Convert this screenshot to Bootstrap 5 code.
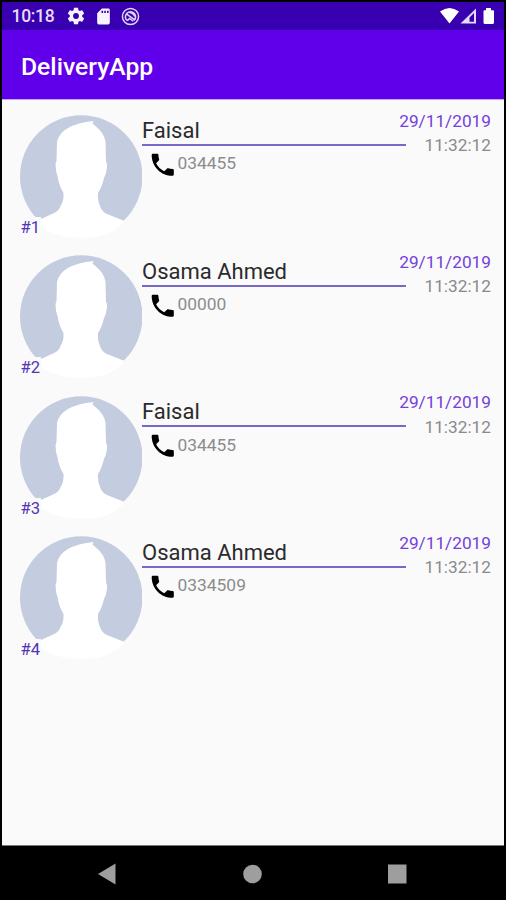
<!DOCTYPE html>
<html lang="en">
<head>
<meta charset="utf-8">
<meta name="viewport" content="width=device-width, initial-scale=1">
<title>DeliveryApp</title>
<link href="https://cdn.jsdelivr.net/npm/bootstrap@5.3.0/dist/css/bootstrap.min.css" rel="stylesheet">
<style>
body{background:#000;font-family:Roboto,sans-serif;line-height:1}
.phone{height:900px;padding:2px 2px 0;overflow:hidden}
.status-bar{height:28px;background:#3900b1;color:#e6dcf8;padding:0 8px 0 9.5px;font-size:17.5px}
.clock{width:54.5px;padding-top:2px;font-weight:500;letter-spacing:-.3px}
.app-bar{height:69px;background:#6000ea;color:#fff;padding:4px 19px 0}
.app-title{font-size:24.7px;font-weight:500;white-space:nowrap}
.screen{background:#fafafa;border-top:1px solid #c7a1fa}
.delivery{height:140.65px;padding:14.5px 13px 0 17.5px}
.avatar{width:122.5px;height:123px}
.order-no{left:1px;bottom:2px;font-size:16.6px;color:#5034b4;background:#fafafa;padding:3px 0 0;width:20px;height:22px;white-space:nowrap}
.who{width:264px;margin-right:-20px}
.person{height:29.5px;padding-top:5.4px;font-size:22px;color:#2b2b2b;white-space:nowrap}
.rule{height:2px;background:#7968c8}
.call{padding-left:6px;color:#8c8c8c;font-size:17.4px;height:36px}
.number{padding-top:9.4px}
.when{font-size:17.25px;white-space:nowrap;margin-top:-1.4px}
.day{color:#7540dc}
.hour{color:#8a8a8a;margin-top:7px}
.nav-keys{height:55px;background:#000;border-top:1px solid #777}
</style>
<script src="https://cdn.jsdelivr.net/npm/bootstrap@5.3.0/dist/js/bootstrap.bundle.min.js"></script>
</head>
<body>
<svg width="0" height="0" class="position-absolute">
<symbol id="face" viewBox="0 0 122.5 123">
<circle cx="61.25" cy="61.5" r="61.25" fill="#c4cce0"/>
<path d="M73.500 6L72.500 8.500L77 12.500Q84 18 85.500 27L86 47Q87.500 48 86.800 54Q86 60 84 63Q82 72 78 78Q77.500 86 80 91Q82 97 87 99L104.500 106Q92 123 61 123Q31 123 14 106L21 104L34 98Q39 96 40.500 91Q44 86 43.500 78Q39 71 37.500 61Q35.500 56 35.500 49L36.500 46L37 27Q39 18 48 13Q58 7.500 73.500 6Z" fill="#fff"/>
</symbol>
<symbol id="handset" viewBox="0 0 24 24"><path d="M6.620 10.790c1.440 2.830 3.760 5.140 6.590 6.590l2.200-2.200c.27-.27.67-.36 1.020-.24 1.120.37 2.330.57 3.570.57.55 0 1 .45 1 1V20c0 .55-.45 1-1 1-9.390 0-17-7.610-17-17 0-.55.45-1 1-1h3.500c.55 0 1 .45 1 1 0 1.250.2 2.450.57 3.570.11.35.03.74-.25 1.020l-2.200 2.200z"/></symbol>
</svg>
<main class="phone d-flex flex-column">
<div class="status-bar d-flex align-items-center">
<span class="clock">10:18</span>
<svg width="20" height="20" viewBox="0 0 24 24" fill="#f7f2ff"><path fill-rule="evenodd" d="M19.430 12.980c.04-.32.07-.64.07-.98s-.03-.66-.07-.98l2.110-1.650a.5.5 0 0 0 .12-.64l-2-3.460a.5.5 0 0 0-.61-.22l-2.490 1c-.52-.4-1.080-.73-1.690-.98l-.38-2.650A.49.49 0 0 0 14 2h-4c-.25 0-.46.18-.49.42l-.38 2.650c-.61.25-1.170.59-1.690.98l-2.490-1a.5.5 0 0 0-.61.22l-2 3.460a.5.5 0 0 0 .12.64l2.110 1.650c-.04.32-.07.65-.07.98s.03.66.07.98l-2.110 1.650a.5.5 0 0 0-.12.64l2 3.460c.12.22.39.3.61.22l2.490-1c.52.4 1.080.73 1.690.98l.38 2.650c.03.24.24.42.49.42h4c.25 0 .46-.18.49-.42l.38-2.650c.61-.25 1.170-.59 1.690-.98l2.490 1c.23.09.49 0 .61-.22l2-3.460a.5.5 0 0 0-.12-.64zM12 15.500a3.500 3.500 0 1 1 0-7 3.500 3.500 0 0 1 0 7z"/></svg>
<svg class="ms-2" width="19" height="19" viewBox="0 0 24 24" fill="#f7f2ff"><path fill-rule="evenodd" d="M18 2h-8L4 8v12c0 1.100.9 2 2 2h12c1.100 0 2-.9 2-2V4c0-1.100-.9-2-2-2zM9.500 4.700h2v3h-2zM13 4.700h2v3h-2zM16.500 4.700h2v3h-2z"/></svg>
<svg class="ms-2" width="19" height="19" viewBox="0 0 20 20" fill="none" stroke="#e2d7f8"><circle cx="10" cy="10" r="8.500" stroke-width="1.500"/><path d="M6.200 14.200A5.400 5.400 0 1 1 13.800 14.200M6 7.500L14.500 13.500M8.500 5.500Q13 6 14.500 10M6.500 14.500L9 12L13 15" stroke-width="1.600"/></svg>
<svg class="ms-auto" width="56" height="20" viewBox="0 0 56 20" fill="#fff"><path d="M0 5.500Q9.500-1.500 19 5.500L9.500 17.500ZM43.500 4.200h2.500V2h5v2.200h2Q54 4.200 54 5.500V16.500Q54 18 52.500 18H45Q43.500 18 43.500 16.500V5.500Q43.500 4.200 44.500 4.200Z"/><path d="M20.500 17.500L36 2.500V17.500ZM29.500 11.500V15.700H34V7Z" fill="#e6dcf8" fill-rule="evenodd"/></svg>
</div>
<header class="app-bar d-flex align-items-center"><h1 class="app-title m-0">DeliveryApp</h1></header>
<section class="screen flex-grow-1">
<article class="delivery d-flex">
<div class="position-relative flex-shrink-0"><svg class="avatar d-block"><use href="#face"/></svg><span class="order-no position-absolute">#1</span></div>
<div class="who flex-shrink-0"><div class="person">Faisal</div><div class="rule"></div><div class="call d-flex"><svg class="mt-1" width="29.500" height="29.500" fill="#000"><use href="#handset"/></svg><span class="number">034455</span></div></div>
<div class="when ms-auto text-end"><div class="day">29/11/2019</div><div class="hour">11:32:12</div></div>
</article>
<article class="delivery d-flex">
<div class="position-relative flex-shrink-0"><svg class="avatar d-block"><use href="#face"/></svg><span class="order-no position-absolute">#2</span></div>
<div class="who flex-shrink-0"><div class="person">Osama Ahmed</div><div class="rule"></div><div class="call d-flex"><svg class="mt-1" width="29.500" height="29.500" fill="#000"><use href="#handset"/></svg><span class="number">00000</span></div></div>
<div class="when ms-auto text-end"><div class="day">29/11/2019</div><div class="hour">11:32:12</div></div>
</article>
<article class="delivery d-flex">
<div class="position-relative flex-shrink-0"><svg class="avatar d-block"><use href="#face"/></svg><span class="order-no position-absolute">#3</span></div>
<div class="who flex-shrink-0"><div class="person">Faisal</div><div class="rule"></div><div class="call d-flex"><svg class="mt-1" width="29.500" height="29.500" fill="#000"><use href="#handset"/></svg><span class="number">034455</span></div></div>
<div class="when ms-auto text-end"><div class="day">29/11/2019</div><div class="hour">11:32:12</div></div>
</article>
<article class="delivery d-flex">
<div class="position-relative flex-shrink-0"><svg class="avatar d-block"><use href="#face"/></svg><span class="order-no position-absolute">#4</span></div>
<div class="who flex-shrink-0"><div class="person">Osama Ahmed</div><div class="rule"></div><div class="call d-flex"><svg class="mt-1" width="29.500" height="29.500" fill="#000"><use href="#handset"/></svg><span class="number">0334509</span></div></div>
<div class="when ms-auto text-end"><div class="day">29/11/2019</div><div class="hour">11:32:12</div></div>
</article>
</section>
<nav class="nav-keys d-flex justify-content-center align-items-center">
<svg width="311" height="24" viewBox="0 0 311 24" fill="#9e9e9e"><path d="M0 13L17.500 2.500V23.500Z"/><circle cx="154.500" cy="13" r="9.300"/><path d="M290 3.500h18.500v19h-18.500z"/></svg>
</nav>
</main>
</body>
</html>
